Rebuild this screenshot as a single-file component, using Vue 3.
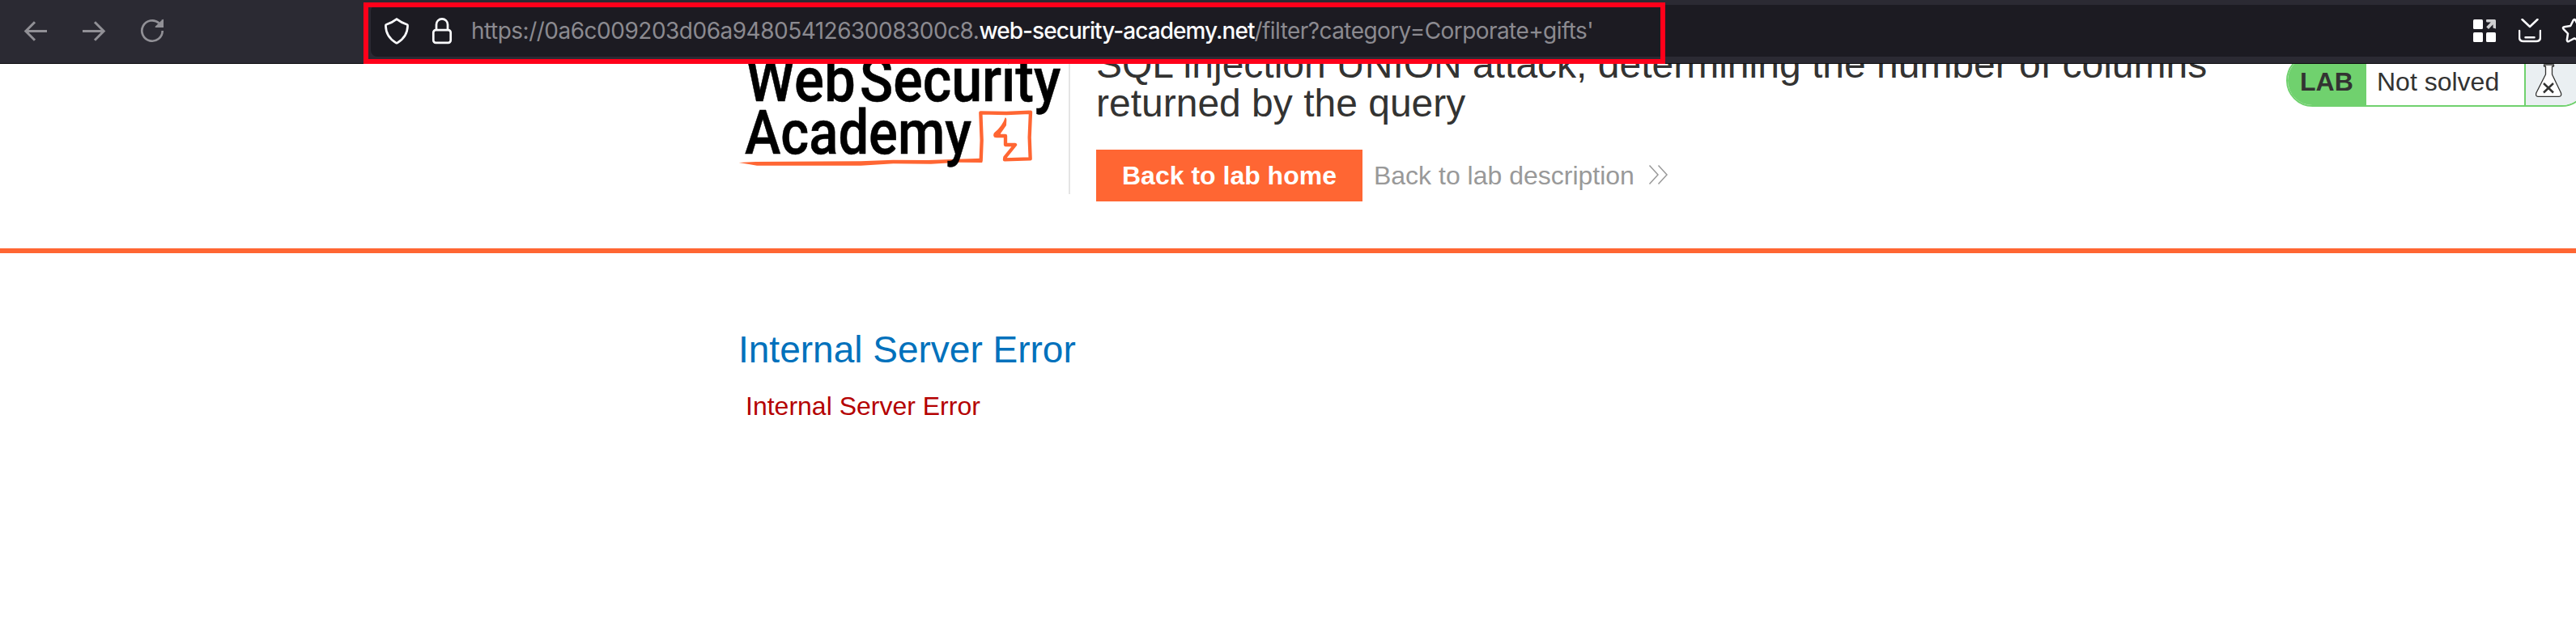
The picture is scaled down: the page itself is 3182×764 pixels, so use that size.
<script setup>
const url = {
  prefix: 'https://0a6c009203d06a9480541263008300c8.',
  host: 'web-security-academy.net',
  path: "/filter?category=Corporate+gifts'",
}
</script>

<template>
  <div class="window">
    <header class="toolbar">
      <nav class="nav">
        <svg class="nav-icon" width="30" height="30" viewBox="0 0 30 30">
          <path d="M29 15.5H3M14 4.2L2.8 15.5L14 26.8" />
        </svg>
        <svg class="nav-icon" width="30" height="30" viewBox="0 0 30 30">
          <path d="M1 15.5H27M16 4.2L27.2 15.5L16 26.8" />
        </svg>
        <svg class="nav-icon reload" width="30" height="30" viewBox="0 0 30 30">
          <path d="M27.7 15A12.7 12.7 0 1 1 23.4 5.5" />
          <path class="solid" d="M29 1V11H19.2Q18 10.600 19 9.500L27.500 1.200Q28.500 .5 29 1Z" />
        </svg>
      </nav>
      <div class="urlbar">
        <svg class="shield" width="32" height="34" viewBox="0 0 32 34">
          <path d="M16 2.600Q22 7.200 28.600 9.200Q29.700 9.600 29.600 10.800C29.300 21 23.500 28 17 31.800Q16 32.400 15 31.800C8.500 28 2.700 21 2.400 10.800Q2.300 9.600 3.400 9.200Q10 7.200 16 2.600Z" />
        </svg>
        <svg class="lock" width="26" height="34" viewBox="0 0 26 34">
          <rect x="2.300" y="16.200" width="21.400" height="15.600" rx="3" />
          <path d="M6 16V9.300A7 7 0 0 1 20 9.300V16" />
        </svg>
        <div class="address"><span class="prefix">{{ url.prefix }}</span><span class="host">{{ url.host }}</span><span class="path">{{ url.path }}</span></div>
        <div class="actions">
          <svg width="28" height="28" viewBox="0 0 28 28">
            <g fill="#fff">
              <rect width="12" height="12" rx="1.500" />
              <rect y="16" width="12" height="12" rx="1.500" />
              <rect x="16" y="16" width="12" height="12" rx="1.500" />
            </g>
            <path fill="#cfcfd1" d="M17 0H26.500Q28 0 28 1.500V11.500L24.500 10.500V6.200L19 12L16.200 9.200L21.800 3.600H17Q16 3.200 16 2V1Q16 0 17 0Z" />
          </svg>
          <svg class="line" width="28" height="30" viewBox="0 0 28 30">
            <path d="M4.500 1L14 10L23.500 1M1 15V23Q1 28 6 28H22Q27 28 27 23V15M8.500 23.300H19.500" />
          </svg>
          <svg class="line star" width="32" height="32" viewBox="0 0 32 32">
            <path d="M14.700 3Q16 .8 17.300 3L20.800 10L28.600 11.200Q31 12 29.500 13.800L24 19.500L25.200 27.500Q25 30 22.800 29L16 25.400L9.200 29Q7 30 6.800 27.500L8 19.500L2.500 13.800Q1 12 3.400 11.200L11.200 10Z" />
          </svg>
        </div>
      </div>
    </header>

    <section class="lab-header">
      <svg class="logo" width="408" height="161" viewBox="66 57 1224 483">
        <path class="scribble-fill" d="M68 423L130 420L520 418L640 413L770 414L968 407L970 423L880 422L780 428L640 427L520 434L135 434L105 429Z" />
        <path class="scribble" d="M965 416L968 340L964 238L1060 240L1149 236L1145 330L1148 409L1053 412L1054 404L1092 357L1056 357L1056 324L1022 324" />
        <path class="scribble-fill" d="M1055 256Q1060 256 1060 264L1059 285L1038 315L1038 329L1016 330Q1008 324 1014 313Q1045 288 1055 256Z" />
        <text x="94" y="196" textLength="406" lengthAdjust="spacingAndGlyphs">Web</text>
        <text x="516" y="196" textLength="745" lengthAdjust="spacingAndGlyphs">Security</text>
        <text x="90" y="390" textLength="840" lengthAdjust="spacingAndGlyphs">Academy</text>
      </svg>
      <div class="title-area">
        <h2>SQL injection UNION attack, determining the number of columns<br>returned by the query</h2>
        <div class="links">
          <a class="home">Back to lab home</a>
          <a class="description">Back to lab description</a>
          <svg class="chevrons" width="26" height="26" viewBox="0 0 26 26">
            <path d="M1.500 1.500L12 13L1.500 24.500M12.500 1.500L23 13L12.500 24.500" />
          </svg>
        </div>
      </div>
      <div class="status">
        <span class="tag">LAB</span>
        <span class="state">Not solved</span>
        <span class="flask">
          <svg width="34" height="42" viewBox="0 0 34 42">
            <path class="glass" d="M11.500 1H23.500V3H21.500V13L32.500 36Q33.500 40.300 30 40.300H4Q.8 40.300 1.800 36L13.500 13V3H11.500Z" />
            <path class="cross" d="M11 24L23 35.500M23 24L11 35.500" />
          </svg>
        </span>
      </div>
    </section>

    <main class="content">
      <h1>Internal Server Error</h1>
      <p>Internal Server Error</p>
    </main>

    <div class="highlight"></div>
  </div>
</template>

<style>
body { margin: 0; background: #fff; }
</style>

<style scoped>
.window {
  position: relative;
  width: 3182px;
  height: 764px;
  overflow: hidden;
  background: #fff;
  font-family: "Liberation Sans", Arial, sans-serif;
}
svg { display: block; flex: none; fill: none; }
.toolbar {
  box-sizing: border-box;
  display: flex;
  height: 79px;
  padding-top: 6px;
  background: #2b2a33;
  border-bottom: 1px solid #0c0c0d;
}
.nav {
  box-sizing: border-box;
  display: flex;
  flex: none;
  gap: 42px;
  width: 458px;
  height: 64px;
  padding: 17px 0 0 29px;
}
.nav-icon { stroke: #919096; stroke-width: 3; }
.nav-icon.reload { stroke-width: 2.700; }
.nav-icon .solid { fill: #919096; stroke: none; }
.urlbar {
  display: flex;
  align-items: center;
  flex: none;
  width: 2760px;
  height: 64px;
  border-radius: 8px;
  background: #1c1b22;
}
.shield, .lock { stroke: #fbfbfe; stroke-width: 2.700; }
.shield { margin-left: 16px; }
.lock { margin-left: 27px; }
.address {
  width: 2473px;
  margin-left: 23px;
  font: 28px/64px Inter, sans-serif;
  color: #8b8a90;
  white-space: nowrap;
}
.prefix { letter-spacing: -0.500px; }
.host { letter-spacing: -0.950px; font-weight: 500; color: #fbfbfe; }
.path { letter-spacing: -0.570px; }
.actions { display: flex; align-items: center; gap: 28px; }
.line { stroke: #fbfbfe; stroke-width: 2.500; stroke-linecap: round; stroke-linejoin: round; }
.star { margin-left: -3px; }

.lab-header {
  box-sizing: border-box;
  display: flex;
  align-items: flex-start;
  height: 234px;
  padding-left: 912px;
  overflow: hidden;
  border-bottom: 6px solid #ff6633;
}
.logo { border-right: 2px solid #e5e5e5; }
.logo text { font: 500 228px Roboto, sans-serif; fill: #000; stroke: #000; stroke-width: 1.500; }
.scribble { stroke: #ff6633; stroke-width: 13; stroke-linejoin: round; stroke-linecap: round; }
.scribble-fill { fill: #ff6633; }
.title-area { flex: none; width: 1470px; margin: -23px 0 0 32px; }
h2 {
  margin: 0 0 33px;
  font-size: 48px;
  font-weight: 400;
  line-height: 48px;
  color: #333332;
}
.links { display: flex; align-items: center; font-size: 32px; line-height: 64px; }
.home { padding: 0 32px; background: #ff6633; color: #fff; font-weight: 700; }
.description { margin-left: 14px; color: #999; }
.chevrons { margin: -3px 0 0 17px; stroke: #999; stroke-width: 1.500; }
.status {
  box-sizing: border-box;
  display: flex;
  flex: none;
  width: 373px;
  height: 65px;
  margin-top: -12px;
  overflow: hidden;
  border: 2px solid #70d16e;
  border-radius: 33px;
  color: #333332;
  font-size: 32px;
  line-height: 64px;
}
.tag { box-sizing: border-box; width: 97px; padding-left: 15px; background: #70d16e; font-weight: 700; }
.state { box-sizing: border-box; width: 197px; padding-left: 13px; border-right: 2px solid #70d16e; }
.flask { flex: 1; padding: 10px 0 0 11px; background: #eaeff2; }
.glass { fill: #fff; stroke: #333332; stroke-width: 1.300; stroke-linejoin: round; }
.cross { stroke: #333332; stroke-width: 2.500; }

.content { padding: 95px 0 0 912px; }
h1 { margin: 0 0 30px; font-size: 46px; font-weight: 400; line-height: 48px; color: #0071bc; }
p { margin: 0 0 0 9px; font-size: 32px; line-height: 32px; color: #b40000; }

/* Annotation frame drawn over the address bar */
.highlight {
  position: absolute;
  box-sizing: border-box;
  left: 449px;
  top: 3px;
  width: 1608px;
  height: 76px;
  border: 6px solid #ff001a;
}
</style>
